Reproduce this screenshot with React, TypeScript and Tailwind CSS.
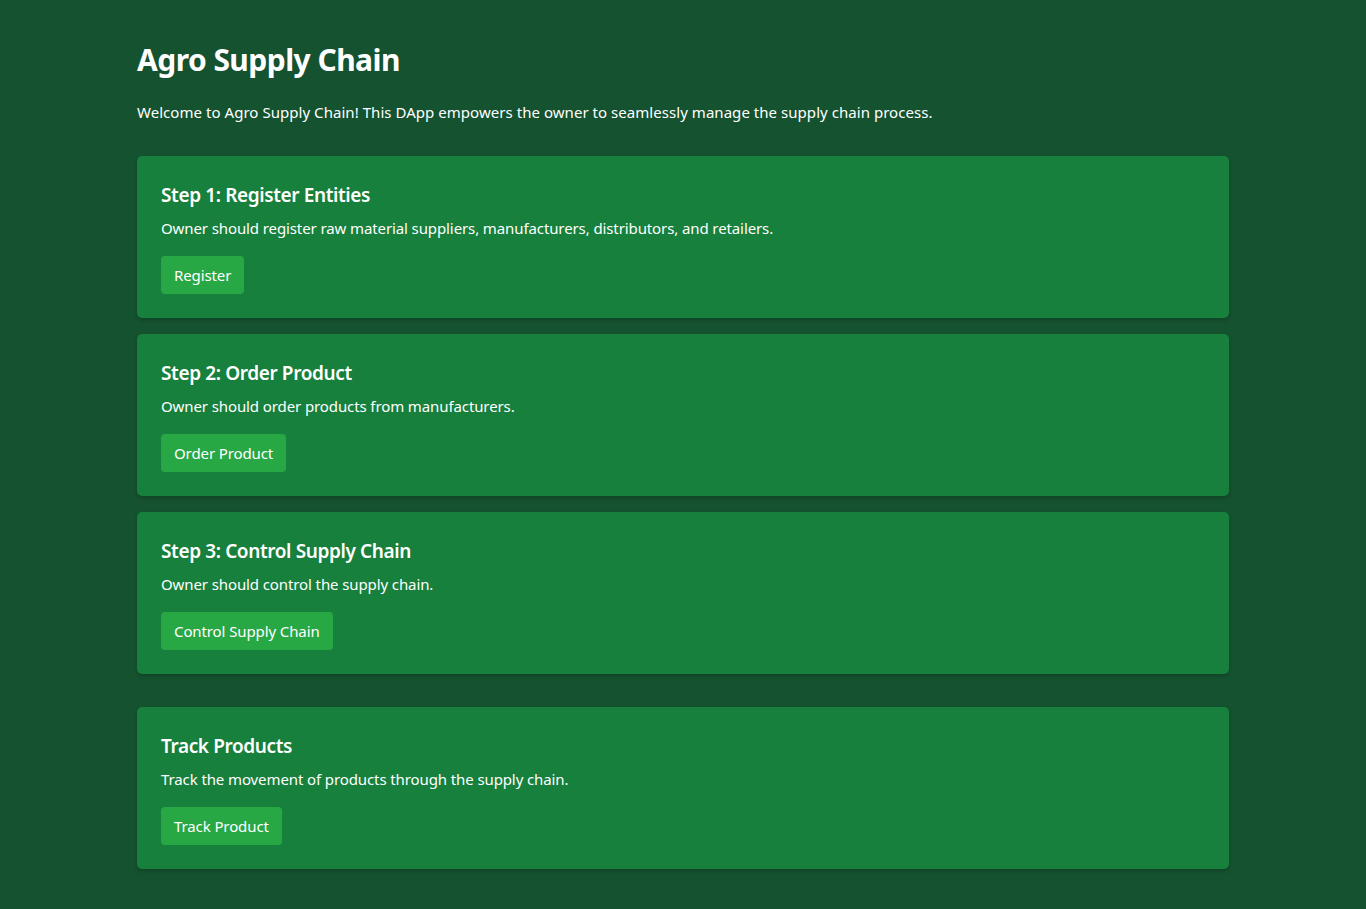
import React from "react";

const steps = [
  {
    title: "Step 1: Register Entities",
    desc: "Owner should register raw material suppliers, manufacturers, distributors, and retailers.",
    btn: "Register",
  },
  {
    title: "Step 2: Order Product",
    desc: "Owner should order products from manufacturers.",
    btn: "Order Product",
  },
  {
    title: "Step 3: Control Supply Chain",
    desc: "Owner should control the supply chain.",
    btn: "Control Supply Chain",
  },
];

function Card({ title, desc, btn }: { title: string; desc: string; btn: string }) {
  return (
    <div className="bg-[#16803c] rounded-[5px] p-6 shadow-[0_2px_4px_rgba(0,0,0,0.2)]">
      <h2 className="text-[19px] leading-[30px] font-semibold tracking-[-0.02em] text-white">{title}</h2>
      <p className="mt-[6px] text-[15px] leading-6 tracking-[-0.007em] text-white">{desc}</p>
      <button className="mt-4 h-[38px] px-[13px] bg-[#28a745] text-white text-[15px] tracking-[-0.007em] rounded-[4px]">
        {btn}
      </button>
    </div>
  );
}

export default function App() {
  return (
    <div
      className="min-h-[909px] bg-[#155230] text-white"
      style={{ fontFamily: '"Noto Sans", "Open Sans", sans-serif' }}
    >
      <div className="w-[1092px] mx-auto pt-10 pb-10">
        <h1 className="text-[30px] leading-[40px] font-bold tracking-[-0.018em]">Agro Supply Chain</h1>
        <p className="mt-5 text-[15px] leading-6 tracking-[0.003em]">
          Welcome to Agro Supply Chain! This DApp empowers the owner to seamlessly manage the supply chain process.
        </p>
        <div className="mt-8 flex flex-col gap-4">
          {steps.map((s) => (
            <Card key={s.title} {...s} />
          ))}
        </div>
        <div className="mt-[33px]">
          <Card
            title="Track Products"
            desc="Track the movement of products through the supply chain."
            btn="Track Product"
          />
        </div>
      </div>
    </div>
  );
}
